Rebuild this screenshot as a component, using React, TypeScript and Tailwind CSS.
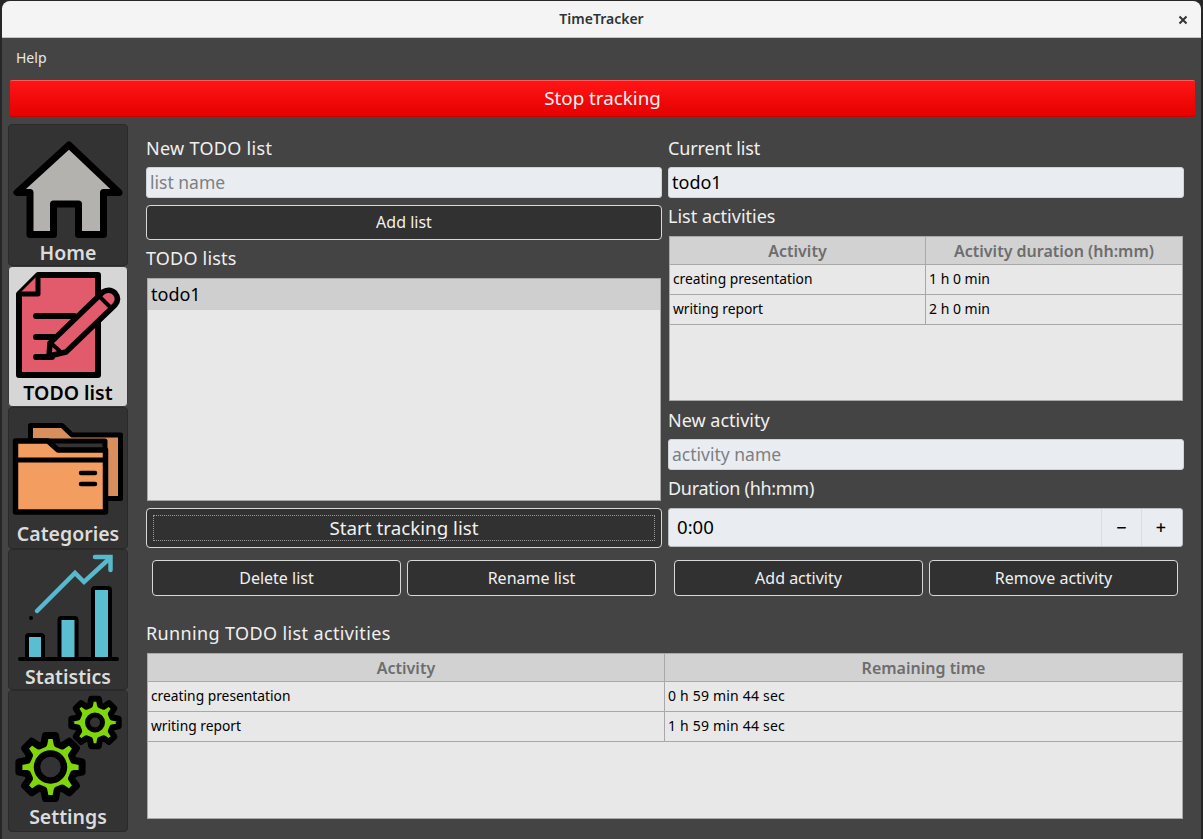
import React from "react";

const font = { fontFamily: '"Noto Sans", sans-serif' };

function gear(cx: number, cy: number, r1: number, r2: number, n: number) {
  const pts: string[] = [];
  for (let i = 0; i < n; i++) {
    const a = (i / n) * Math.PI * 2 - Math.PI / 2;
    const w = (Math.PI * 2) / n;
    const p = (r: number, t: number) => `${(cx + r * Math.cos(t)).toFixed(1)} ${(cy + r * Math.sin(t)).toFixed(1)}`;
    pts.push(p(r2, a - w * 0.36), p(r1, a - w * 0.2), p(r1, a + w * 0.2), p(r2, a + w * 0.36));
  }
  return "M" + pts.join("L") + "Z";
}

function IconHome() {
  return (
    <svg width="120" height="116" viewBox="8 124 120 116" className="shrink-0">
      <path d="M69 144 L17 191.5 H30 V233.5 H53.5 V203 H78.5 V233.5 H103.5 V191.5 H119 Z" fill="#b4b2af" stroke="#000" strokeWidth="7" strokeLinejoin="round" />
    </svg>
  );
}
function IconTodo() {
  return (
    <svg width="120" height="116" viewBox="8 266 120 116" className="shrink-0">
      <path d="M38 274 H98 V374 H19 V293 Z" fill="#e25b6c" stroke="#000" strokeWidth="6" strokeLinejoin="round" />
      <path d="M19 293 H38 V274" fill="#e25b6c" stroke="#000" strokeWidth="5" strokeLinejoin="round" />
      <path d="M36 315 H74 M36 336 H56 M36 356 H52" stroke="#000" strokeWidth="6" strokeLinecap="round" fill="none" />
      <path d="M50 342 L103 291 Q110 287 115 292 Q120 298 115 304 L66 351 L49 355 Z" fill="#e25b6c" stroke="#000" strokeWidth="5.5" strokeLinejoin="round" />
      <path d="M99 295 L112 308 M52 343 L63 353" stroke="#000" strokeWidth="4" fill="none" />
    </svg>
  );
}
function IconFolder() {
  return (
    <svg width="120" height="116" viewBox="8 407 120 116" className="shrink-0">
      <path d="M30.5 440 V424.5 H62 L72 434 H120.5 V497.5 H105 V440 Z" fill="#d98f5c" stroke="#000" strokeWidth="5" strokeLinejoin="round" />
      <path d="M15.5 440 H48 L58 449 H105.5 V511 H15.5 Z" fill="#f39d60" stroke="#000" strokeWidth="5.5" strokeLinejoin="round" />
      <path d="M15.5 459 H105.5" stroke="#000" strokeWidth="5" />
      <path d="M81 472 H95 M81 483 H95" stroke="#000" strokeWidth="4.5" strokeLinecap="round" />
    </svg>
  );
}
function IconStats() {
  return (
    <svg width="120" height="116" viewBox="8 549 120 116" className="shrink-0">
      <path d="M37 610 L75 572 L84 581 L110 557" stroke="#58b8cc" strokeWidth="4.5" fill="none" strokeLinecap="round" />
      <path d="M95 556 H110.5 V569" stroke="#58b8cc" strokeWidth="4.5" fill="none" strokeLinecap="round" />
      <circle cx="31" cy="617" r="2" fill="#000" />
      <rect x="27" y="634" width="16" height="24" rx="2" fill="#5bbdd0" stroke="#000" strokeWidth="4" />
      <rect x="59.5" y="617" width="17" height="41" rx="2" fill="#5bbdd0" stroke="#000" strokeWidth="4" />
      <rect x="93" y="587" width="17" height="71" rx="2" fill="#5bbdd0" stroke="#000" strokeWidth="4" />
      <path d="M20 658 H117" stroke="#000" strokeWidth="4" strokeLinecap="round" />
    </svg>
  );
}
function IconGears() {
  return (
    <svg width="120" height="116" viewBox="8 691 120 116" className="shrink-0">
      <path d={gear(50.5, 767, 32, 24, 8)} fill="#7fd60a" stroke="#000" strokeWidth="7" strokeLinejoin="round" />
      <circle cx="50.5" cy="767" r="13.5" fill="#333333" stroke="#000" strokeWidth="6.5" />
      <path d={gear(95, 722.5, 24, 18, 8)} fill="#7fd60a" stroke="#000" strokeWidth="6" strokeLinejoin="round" />
      <circle cx="95" cy="722.5" r="7.5" fill="#333333" stroke="#000" strokeWidth="5" />
    </svg>
  );
}

function SideItem({ label, icon, active, h, labelCls = "" }: { label: string; icon: React.ReactNode; active?: boolean; h: string; labelCls?: string }) {
  return (
    <div className={`${h} flex flex-col items-center overflow-hidden rounded-[4px] border ${active ? "bg-[#d6d6d6] border-[#3a3a3a] text-black" : "bg-[#333333] border-[#2a2a2a] text-[#dcdcdc]"}`}>
      {icon}
      <span className={`text-[19.5px] leading-[24px] font-semibold whitespace-nowrap ${labelCls}`}>{label}</span>
    </div>
  );
}

function Label({ children, cls = "" }: { children: React.ReactNode; cls?: string }) {
  return <div className={`h-[24px] text-[18px] leading-[24px] text-[#f0f0f0] ${cls}`}>{children}</div>;
}

function Btn({ children, cls = "" }: { children: React.ReactNode; cls?: string }) {
  return (
    <div className={`flex items-center justify-center rounded-[4px] border border-[#d8d8d8] bg-[#313131] text-[16px] text-[#f0f0f0] ${cls}`}>
      {children}
    </div>
  );
}

function Input({ value, placeholder, cls = "" }: { value?: string; placeholder?: string; cls?: string }) {
  return (
    <input
      readOnly
      value={value ?? ""}
      placeholder={placeholder}
      className={`block h-[31px] w-full rounded-[3px] border border-[#cfd3d8] bg-[#e9edf2] px-[3px] pb-[2px] text-[18px] text-black outline-none placeholder:text-[17.5px] placeholder:text-[#7d7f82] ${cls}`}
    />
  );
}

function DataTable({ cols, first, rows, cls, valueCls = "" }: { cols: string[]; first: string; rows: string[][]; cls: string; valueCls?: string }) {
  return (
    <div className={`overflow-hidden border border-[#a8a8a8] bg-[#e8e8e8] ${cls}`}>
      <div className="flex h-[28px] border-b border-[#a8a8a8] bg-[#d2d2d2] text-[16px] font-semibold text-[#6d6d6d]">
        <div className={`${first} flex shrink-0 items-center justify-center border-r border-[#a8a8a8]`}>{cols[0]}</div>
        <div className="flex flex-1 items-center justify-center">{cols[1]}</div>
      </div>
      {rows.map((r) => (
        <div key={r[0]} className="flex h-[30px] border-b border-[#a8a8a8] text-[13.8px] text-black">
          <div className={`${first} flex shrink-0 items-center border-r border-[#a8a8a8] pb-[1px] pl-[3px]`}>{r[0]}</div>
          <div className={`flex flex-1 items-center pb-[2px] pl-[3px] ${valueCls}`}>{r[1]}</div>
        </div>
      ))}
    </div>
  );
}

export default function App() {
  return (
    <div className="h-[839px] w-[1203px] overflow-hidden bg-[#262626] px-[2px] pt-px" style={font}>
      <div className="flex h-[838px] flex-col rounded-t-[8px] bg-[#444444]">
        <div className="relative flex h-[37px] shrink-0 items-center justify-center rounded-t-[8px] border-b border-[#c4c4c4] bg-[#f4f4f4] pb-[2px] text-[14px] font-semibold text-[#2e3436]">
          TimeTracker
          <svg width="10" height="10" viewBox="0 0 10 10" className="absolute right-[13px] top-[14px]">
            <path d="M1.5 1.5 L8.5 8.5 M8.5 1.5 L1.5 8.5" stroke="#2e3436" strokeWidth="2" />
          </svg>
        </div>
        <div className="flex h-[42px] shrink-0 items-center pb-[4px] pl-[14px] text-[14px] text-[#e8e8e8]">Help</div>
        <div className="ml-[8px] mr-[6px] flex h-[37px] shrink-0 items-center justify-center rounded-[2px] border-t border-t-[#ff5a5a] border-b border-b-[#c40000] bg-gradient-to-b from-[#ff1414] to-[#e60000] text-[18.8px] text-[#f4f4f4]">
          Stop tracking
        </div>
        <div className="mt-[7px] flex min-h-0 flex-1">
          <div className="ml-[6px] flex w-[120px] shrink-0 flex-col">
            <SideItem h="h-[142px]" label="Home" icon={<IconHome />} />
            <SideItem h="h-[141px]" label="TODO list" active labelCls="-mt-[2px]" icon={<IconTodo />} />
            <SideItem h="h-[142px]" label="Categories" labelCls="-mt-[2px]" icon={<IconFolder />} />
            <SideItem h="h-[141px]" label="Statistics" labelCls="-mt-[1px]" icon={<IconStats />} />
            <SideItem h="h-[142px]" label="Settings" labelCls="-mt-[2px]" icon={<IconGears />} />
          </div>
          <div className="ml-[18px] w-[1038px] shrink-0 pt-[12px]">
            <div className="flex gap-[6px]">
              <div className="w-[516px]">
                <Label cls="tracking-[0.3px]">New TODO list</Label>
                <Input placeholder="list name" cls="mt-[7px]" />
                <Btn cls="mt-[7px] h-[35px] pb-[2px]">Add list</Btn>
                <Label cls="mt-[6px] tracking-[0.2px]">TODO lists</Label>
                <div className="mx-px mt-[8px] h-[223px] border border-[#a8a8a8] bg-[#e8e8e8]">
                  <div className="flex h-[31px] items-center bg-[#cfcfcf] pl-[3px] text-[18px] text-black">todo1</div>
                </div>
                <Btn cls="mt-[7px] h-[40px] p-[6px] text-[18.8px]">
                  <div className="flex h-full w-full items-center justify-center border border-dotted border-[#9a9a9a]">Start tracking list</div>
                </Btn>
                <div className="mt-[12px] flex gap-[6px] px-[6px]">
                  <Btn cls="h-[36px] flex-1">Delete list</Btn>
                  <Btn cls="h-[36px] flex-1">Rename list</Btn>
                </div>
              </div>
              <div className="w-[516px]">
                <Label cls="-tracking-[0.15px]">Current list</Label>
                <Input value="todo1" cls="mt-[7px]" />
                <Label cls="mt-[6px]">List activities</Label>
                <DataTable
                  cls="mx-px mt-[8px] h-[165px]"
                  first="w-[256px]"
                  cols={["Activity", "Activity duration (hh:mm)"]}
                  rows={[["creating presentation", "1 h 0 min"], ["writing report", "2 h 0 min"]]}
                  valueCls="text-[14px]"
                />
                <Label cls="mt-[7px]">New activity</Label>
                <Input placeholder="activity name" cls="mt-[7px]" />
                <Label cls="mt-[6px] -tracking-[0.3px]">Duration (hh:mm)</Label>
                <div className="mt-[8px] flex h-[39px] w-[515px] items-center rounded-[3px] border border-[#b9bcc0] bg-[#e9edf2] text-black">
                  <div className="flex-1 pb-[1px] pl-[8px] text-[18.6px]">0:00</div>
                  <div className="flex h-full w-[40px] items-center justify-center border-l border-[#d9dde2] pb-[1px] text-[18px] font-medium">−</div>
                  <div className="flex h-full w-[41px] items-center justify-center border-l border-[#d9dde2] pb-[1px] pr-[2px] text-[18px] font-medium">+</div>
                </div>
                <div className="mt-[13px] flex gap-[6px] px-[6px]">
                  <Btn cls="h-[36px] flex-1">Add activity</Btn>
                  <Btn cls="h-[36px] flex-1">Remove activity</Btn>
                </div>
              </div>
            </div>
            <Label cls="mt-[25px] tracking-[0.37px]">Running TODO list activities</Label>
            <DataTable
              cls="ml-px mt-[8px] h-[166px] w-[1036px]"
              first="w-[517px]"
              cols={["Activity", "Remaining time"]}
              rows={[["creating presentation", "0 h 59 min 44 sec"], ["writing report", "1 h 59 min 44 sec"]]}
              valueCls="text-[14px] tracking-[0.2px]"
            />
          </div>
        </div>
      </div>
    </div>
  );
}
